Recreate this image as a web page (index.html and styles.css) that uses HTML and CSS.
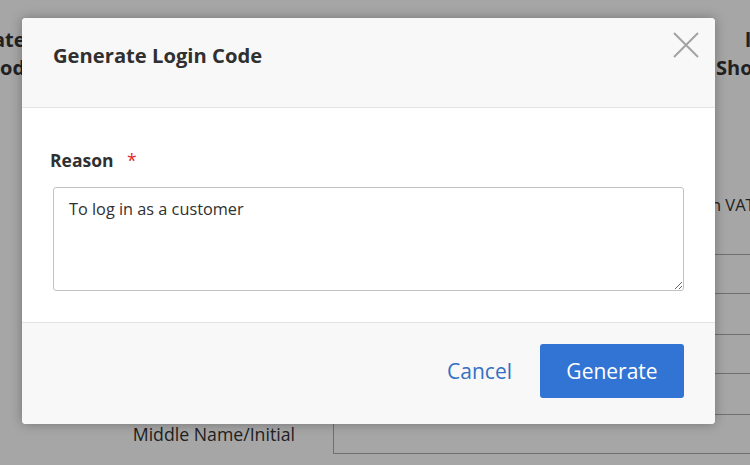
FILE: index.html
```html
<!DOCTYPE html>
<html lang="en">
<head>
<meta charset="utf-8">
<title>Generate Login Code</title>
<link rel="stylesheet" href="styles.css">
</head>
<body>
<div class="page">
  <header class="page-head">
    <div class="head-left">
      <div class="hl1">ate</div>
      <div class="hl2">ode</div>
    </div>
    <div class="head-spacer"></div>
    <div class="head-right">
      <div class="hr1">l</div>
      <div class="hr2">Shopping Cart</div>
    </div>
  </header>
  <div class="bg-form">
    <div class="vat-row"><span class="vat-text">on VAT ID</span></div>
    <div class="field"><label class="field-label">Name Prefix</label><div class="field-input"></div></div>
    <div class="field"><label class="field-label">First Name</label><div class="field-input"></div></div>
    <div class="field"><label class="field-label">Middle Name/Initial</label><div class="field-input"></div></div>
  </div>
  <div class="overlay"></div>
  <div class="modal">
    <div class="modal-head">
      <h1 class="modal-title">Generate Login Code</h1>
      <button class="modal-close" aria-label="Close">
        <svg width="26" height="26" viewBox="0 0 26 26"><path d="M1 1 L25 25 M25 1 L1 25" stroke="#a3a3a3" stroke-width="2" fill="none"/></svg>
      </button>
    </div>
    <div class="modal-body">
      <div class="reason-label">Reason <span class="req">*</span></div>
      <textarea class="reason-input">To log in as a customer</textarea>
    </div>
    <div class="modal-foot">
      <a class="cancel-link">Cancel</a>
      <button class="btn-primary">Generate</button>
    </div>
  </div>
</div>
</body>
</html>
```
FILE: styles.css
```css
* { box-sizing: border-box; }
html, body { margin: 0; padding: 0; }
body {
  width: 750px;
  height: 465px;
  overflow: hidden;
  background: #fff;
  font-family: "Open Sans", "DejaVu Sans", sans-serif;
  color: #333;
}
.page {
  position: relative;
  width: 750px;
  height: 465px;
  overflow: hidden;
}
.page-head {
  display: flex;
  height: 115px;
  padding-top: 26px;
  font-weight: 700;
  font-size: 20px;
  line-height: 28px;
  color: #333;
}
.head-left { width: 60px; white-space: nowrap; }
.hl1 { margin-left: -7px; }
.hl2 { margin-left: 0; }
.head-spacer { flex: 1; }
.head-right { width: 34px; white-space: nowrap; }
.hr1 { padding-left: 29px; }
.bg-form {
  display: flex;
  flex-direction: column;
  padding-top: 80px;
}
.vat-row {
  height: 20px;
  line-height: 20px;
  font-size: 16.5px;
  color: #333;
  margin-bottom: 39px;
}
.vat-text { padding-left: 701px; white-space: nowrap; }
.field {
  display: grid;
  grid-template-columns: 295px 1fr;
  column-gap: 38px;
  align-items: center;
  height: 40px;
  margin-bottom: 40px;
}
.field-label {
  text-align: right;
  font-size: 17.7px;
  color: #333;
}
.field-input {
  height: 40px;
  border: 1px solid #adadad;
  margin-right: -20px;
}
.overlay {
  position: absolute;
  inset: 0;
  background: rgba(0, 0, 0, 0.35);
}
.modal {
  position: absolute;
  left: 22px;
  top: 18px;
  width: 693px;
  height: 406px;
  background: #fff;
  border-radius: 4px;
  overflow: hidden;
  box-shadow: 0 0 12px rgba(0, 0, 0, 0.3);
  display: flex;
  flex-direction: column;
}
.modal-head {
  height: 90px;
  flex: none;
  background: #f8f8f8;
  border-bottom: 1px solid #e3e3e3;
  display: flex;
  justify-content: space-between;
  align-items: flex-start;
  padding: 23px 16px 0 31px;
}
.modal-title {
  margin: 0;
  font-size: 20.2px;
  line-height: 28px;
  font-weight: 700;
  color: #303030;
}
.modal-close {
  margin-top: -9px;
  padding: 0;
  border: 0;
  background: none;
  width: 26px;
  height: 26px;
  display: block;
}
.modal-close svg { display: block; }
.modal-body {
  height: 215px;
  flex: none;
  border-bottom: 1px solid #e3e3e3;
  padding: 40px 31px 0;
}
.reason-label {
  margin-left: -3px;
  font-size: 17.5px;
  line-height: 24px;
  font-weight: 700;
  color: #303030;
}
.req {
  color: #e02b27;
  font-weight: 400;
  margin-left: 9px;
}
.reason-input {
  display: block;
  margin-top: 15px;
  width: 631px;
  height: 104px;
  border: 1px solid #c2c2c2;
  border-radius: 3px;
  padding: 10px 15px;
  font-family: "Open Sans", "DejaVu Sans", sans-serif;
  font-size: 16.3px;
  line-height: 22px;
  color: #303030;
  background: #fff;
}
.modal-foot {
  flex: 1;
  background: #f8f8f8;
  display: flex;
  justify-content: flex-end;
  align-items: flex-start;
  padding: 21px 31px 0 0;
}
.cancel-link {
  font-size: 21px;
  line-height: 54px;
  color: #3470c2;
  margin-right: 28px;
  cursor: pointer;
}
.btn-primary {
  width: 144px;
  height: 54px;
  border: 0;
  border-radius: 3px;
  background: #3174d3;
  color: #fff;
  font-family: "Open Sans", "DejaVu Sans", sans-serif;
  font-size: 21px;
}
```
